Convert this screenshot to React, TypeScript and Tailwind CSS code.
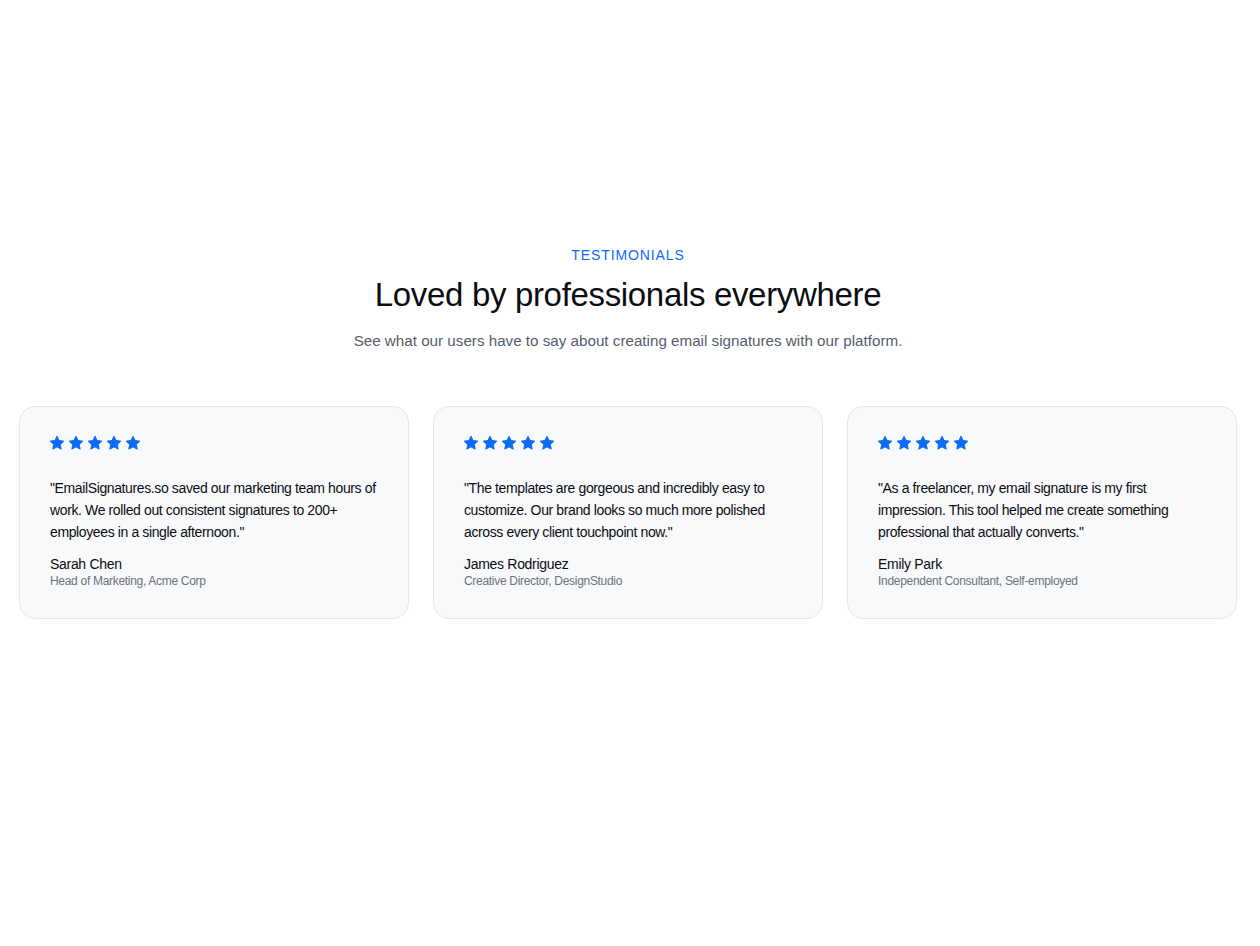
const testimonials = [
  {
    quote:
      '"EmailSignatures.so saved our marketing team hours of work. We rolled out consistent signatures to 200+ employees in a single afternoon."',
    name: "Sarah Chen",
    role: "Head of Marketing, Acme Corp",
  },
  {
    quote:
      '"The templates are gorgeous and incredibly easy to customize. Our brand looks so much more polished across every client touchpoint now."',
    name: "James Rodriguez",
    role: "Creative Director, DesignStudio",
  },
  {
    quote:
      '"As a freelancer, my email signature is my first impression. This tool helped me create something professional that actually converts."',
    name: "Emily Park",
    role: "Independent Consultant, Self-employed",
  },
]

function Star() {
  return (
    <svg width="16" height="16" viewBox="0 0 24 24" fill="#0a6cf5">
      <path
        d="M12 1.8l3.1 6.5 7.1.9-5.2 4.9 1.3 7.1L12 17.8l-6.3 3.4 1.3-7.1-5.2-4.9 7.1-.9z"
        stroke="#0a6cf5"
        strokeWidth="1.5"
        strokeLinejoin="round"
      />
    </svg>
  )
}

export default function App() {
  return (
    <div
      className="min-h-screen bg-white pl-[19px] pr-[23px] pt-[246px] pb-20"
      style={{ fontFamily: '"Liberation Sans", Arial, sans-serif' }}
    >
      <div className="flex flex-col items-center text-center">
        <div className="text-[14px] tracking-[0.9px] text-[#0a6cf5] leading-[18px]">TESTIMONIALS</div>
        <h2 className="mt-[11px] text-[33px] leading-[40px] text-[#0b0d12] tracking-[-0.01em]">
          Loved by professionals everywhere
        </h2>
        <p className="mt-[15px] text-[15.2px] leading-[22px] text-[#535d6e]">
          See what our users have to say about creating email signatures with our platform.
        </p>
      </div>

      <div className="mt-[54px] grid grid-cols-3 gap-6">
        {testimonials.map((t) => (
          <div
            key={t.name}
            className="rounded-2xl border border-[#e3e6eb] bg-[#f8f9fb] px-[30px] pt-[28px] pb-[30px] h-[213px]"
          >
            <div className="-ml-[1px] flex gap-[3px]">
              <Star />
              <Star />
              <Star />
              <Star />
              <Star />
            </div>
            <p className="mt-[26px] text-[14px] leading-[22px] tracking-[-0.38px] text-[#0b0d12]">{t.quote}</p>
            <div className="mt-[11px] text-[14px] leading-[20px] tracking-[-0.3px] text-[#0b0d12]">{t.name}</div>
            <div className="text-[12px] leading-[14px] tracking-[-0.3px] text-[#6b7280]">{t.role}</div>
          </div>
        ))}
      </div>
    </div>
  )
}
